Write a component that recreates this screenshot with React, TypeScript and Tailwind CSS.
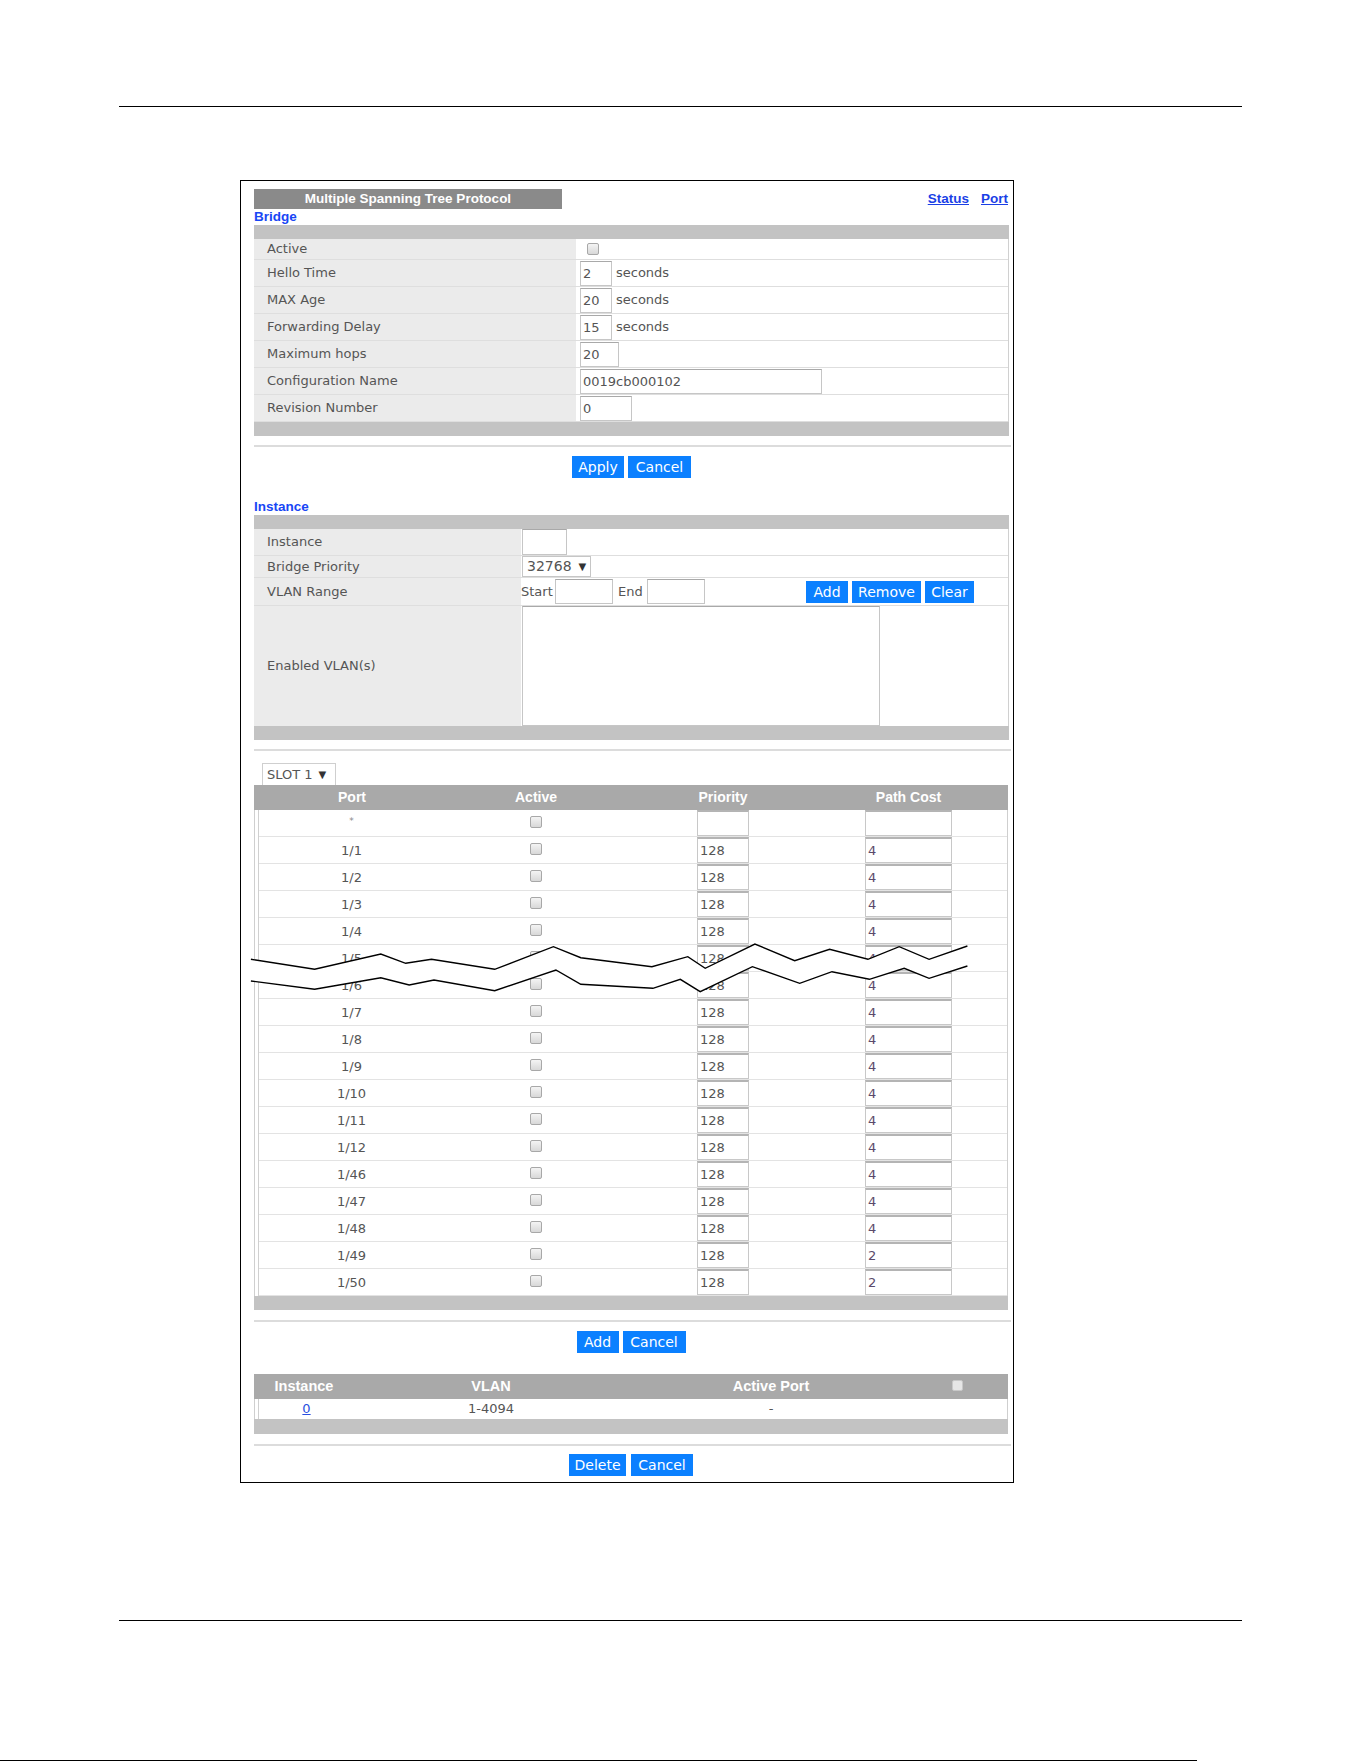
import React from "react";

const body = "font-['DejaVu_Sans',sans-serif]";
const sansB = "font-['Liberation_Sans',Arial,sans-serif] font-bold";

function Check({ className = "" }: { className?: string }) {
  return (
    <div
      className={
        "w-[12px] h-[12px] rounded-[2px] border border-[#a8a8a8] bg-gradient-to-b from-[#f4f4f4] to-[#d8d8d8] " +
        className
      }
    />
  );
}

function Box({ w, text = "", className = "" }: { w: string; text?: string; className?: string }) {
  return (
    <div
      className={
        "h-[25px] border border-[#c6c6c6] border-t-[#a9a9a9] bg-white pl-[2px] text-[13px] leading-[23px] text-[#555] whitespace-nowrap overflow-hidden " +
        w +
        " " +
        className
      }
    >
      {text}
    </div>
  );
}

function Btn({ w, label }: { w: string; label: string }) {
  return (
    <div className={"h-[22px] bg-[#0b80ff] text-white text-[14px] leading-[22px] text-center " + w}>
      {label}
    </div>
  );
}

function Bar({ h = "h-[14px]" }: { h?: string }) {
  return <div className={h + " bg-[#c3c3c3]"} />;
}

function Sep() {
  return <div className="h-[2px] bg-[#dcdcdc]" />;
}

const bridgeRows: { label: string; h: string; value: React.ReactNode }[] = [
  { label: "Active", h: "h-[21px]", value: <Check className="ml-[7px]" /> },
  {
    label: "Hello Time",
    h: "h-[27px]",
    value: (
      <>
        <Box w="w-[32px]" text="2" />
        <span className="ml-[4px]">seconds</span>
      </>
    ),
  },
  {
    label: "MAX Age",
    h: "h-[27px]",
    value: (
      <>
        <Box w="w-[32px]" text="20" />
        <span className="ml-[4px]">seconds</span>
      </>
    ),
  },
  {
    label: "Forwarding Delay",
    h: "h-[27px]",
    value: (
      <>
        <Box w="w-[32px]" text="15" />
        <span className="ml-[4px]">seconds</span>
      </>
    ),
  },
  { label: "Maximum hops", h: "h-[27px]", value: <Box w="w-[39px]" text="20" /> },
  { label: "Configuration Name", h: "h-[27px]", value: <Box w="w-[242px]" text="0019cb000102" /> },
  { label: "Revision Number", h: "h-[27px]", value: <Box w="w-[52px]" text="0" /> },
];

const ports = [
  "1/1", "1/2", "1/3", "1/4", "1/5", "1/6", "1/7", "1/8", "1/9", "1/10", "1/11", "1/12",
  "1/46", "1/47", "1/48", "1/49", "1/50",
];
const costs: Record<string, string> = { "1/49": "2", "1/50": "2" };

const raw1: [number, number][] = [
  [251, 959.3], [315, 969.3], [381.5, 954], [406.5, 963.3], [432.5, 959.3], [496, 969.3],
  [555, 946.7], [582.5, 957.7], [654, 966.7], [690, 956.7], [707.5, 968.3], [757.5, 944],
  [797.5, 960.7], [832.5, 949.3], [871, 959.3], [902.5, 946.7], [932.5, 959.3], [971, 946],
];
const raw2: [number, number][] = [
  [251, 981], [315, 989.3], [381.5, 977.7], [410, 985], [435, 980], [496, 990.7],
  [557.5, 970], [582.5, 984.3], [655, 988.3], [682.5, 979.3], [702.5, 991.7], [755, 966.7],
  [802.5, 983.3], [835, 971.7], [872.5, 979.3], [907.5, 968.3], [932.5, 978.3], [971, 966],
];
const fx = (x: number) => (240 + ((x - 240) * 2) / 2.01).toFixed(1);
const pts = (a: [number, number][]) => a.map(([x, y]) => fx(x) + "," + y).join(" ");
const line1 = pts(raw1);
const line2 = pts(raw2);
const line2Rev = pts([...raw2].reverse());

export default function App() {
  return (
    <div className={"relative w-[1361px] h-[1761px] bg-white overflow-hidden " + body}>
      <div className="pt-[106px] px-[119px]">
        <div className="h-px bg-black" />
      </div>

      <div className="ml-[240px] mt-[73px] w-[774px] border border-black pl-[13px] pr-[2px] pt-[8px] pb-[6px] text-[13px] text-[#555]">
        {/* title row */}
        <div className="flex justify-between items-center h-[20px]">
          <div className={"w-[308px] h-[20px] bg-[#8a8a8a] text-white text-[13.5px] leading-[20px] text-center " + sansB}>
            Multiple Spanning Tree Protocol
          </div>
          <div className={"flex gap-[12px] pr-[3px] text-[13.5px] text-[#1a3fe6] underline " + sansB}>
            <span>Status</span>
            <span>Port</span>
          </div>
        </div>
        <div className={"h-[16px] leading-[16px] text-[13.5px] text-[#1846f5] " + sansB}>Bridge</div>

        {/* Bridge table */}
        <div className="mr-[2px]">
          <Bar />
          <div className="border-r border-[#d0d0d0]">
            {bridgeRows.map((r) => (
              <div key={r.label} className={"grid grid-cols-[322px_1fr] border-b border-[#dedede] " + r.h}>
                <div className="bg-[#ebebeb] pl-[13px] flex items-center">{r.label}</div>
                <div className="pl-[4px] flex items-center bg-white">{r.value}</div>
              </div>
            ))}
          </div>
          <Bar />
        </div>

        <div className="mt-[9px]">
          <Sep />
        </div>
        <div className="mt-[9px] mr-[2px] flex justify-center gap-[4px]">
          <Btn w="w-[52px]" label="Apply" />
          <Btn w="w-[63px]" label="Cancel" />
        </div>

        <div className={"mt-[21px] h-[16px] leading-[16px] text-[13.5px] text-[#1846f5] " + sansB}>Instance</div>

        {/* Instance table */}
        <div className="mr-[2px]">
          <Bar />
          <div className="border-r border-[#d0d0d0]">
            <div className="grid grid-cols-[267px_1fr] h-[27px] border-b border-[#dedede]">
              <div className="bg-[#ebebeb] pl-[13px] flex items-center">Instance</div>
              <div className="flex items-start">
                <div className="w-[45px] h-[26px] border border-[#c6c6c6] border-t-[#a9a9a9] ml-px" />
              </div>
            </div>
            <div className="grid grid-cols-[267px_1fr] h-[22px] border-b border-[#dedede]">
              <div className="bg-[#ebebeb] pl-[13px] flex items-center">Bridge Priority</div>
              <div className="flex items-center">
                <div className="ml-px w-[69px] h-[21px] border border-[#c6c6c6] flex items-center pl-[4px] text-[14px] text-[#555]">
                  32768
                  <span className="ml-[7px] text-[10px] text-[#333]">▼</span>
                </div>
              </div>
            </div>
            <div className="grid grid-cols-[267px_1fr] h-[28px] border-b border-[#dedede]">
              <div className="bg-[#ebebeb] pl-[13px] flex items-center">VLAN Range</div>
              <div className="flex items-center">
                <span className="w-[34px]">Start</span>
                <Box w="w-[58px]" />
                <span className="ml-[5px] w-[29px]">End</span>
                <Box w="w-[58px]" />
                <div className="ml-[101px] flex gap-[4px]">
                  <Btn w="w-[42px]" label="Add" />
                  <Btn w="w-[69px]" label="Remove" />
                  <Btn w="w-[49px]" label="Clear" />
                </div>
              </div>
            </div>
            <div className="grid grid-cols-[267px_1fr] h-[120px]">
              <div className="bg-[#ebebeb] pl-[13px] flex items-center">Enabled VLAN(s)</div>
              <div className="flex items-stretch">
                <div className="ml-px w-[358px] border border-[#c6c6c6] border-t-[#a9a9a9] bg-white" />
              </div>
            </div>
          </div>
          <Bar />
        </div>

        <div className="mt-[9px]">
          <Sep />
        </div>

        {/* Slot select */}
        <div className="mt-[12px] ml-[8px] w-[74px] h-[22px] border border-[#cfcfcf] border-b-0 flex items-center pl-[4px] text-[13px] text-[#555]">
          SLOT 1<span className="ml-[6px] text-[10px] text-[#333]">▼</span>
        </div>

        {/* Port table */}
        <div className="mr-[3px]">
          <div className={"grid grid-cols-[196px_172px_75px_168px_1fr] h-[25px] bg-[#a9a9a9] text-white text-[14px] items-center " + sansB}>
            <div className="text-center">Port</div>
            <div className="text-center">Active</div>
            <div />
            <div className="w-[52px] text-center">Priority</div>
            <div className="w-[87px] text-center">Path Cost</div>
          </div>
          <div className="border-l border-[#b0b0b0] border-r border-[#cfcfcf]">
            <div className="ml-[3px] border-l border-[#d0d0d0]">
              {["*", ...ports].map((p) => (
                <div
                  key={p}
                  className="grid grid-cols-[185px_184px_69px_168px_1fr] h-[27px] border-b border-[#e3e3e3] items-start"
                >
                  <div className="h-full flex items-center justify-center pt-[1px] text-[13px] text-[#555]">
                    {p === "*" ? <span className="text-[9px] text-[#888] -mt-[4px]">*</span> : p}
                  </div>
                  <div className="h-full flex justify-center pt-[6px]">
                    <Check />
                  </div>
                  <div />
                  <div className="w-[52px] h-[26px] border border-[#c8c8c8] border-t-2 border-t-[#b4b4b4] pl-[2px] text-[13px] leading-[23px] text-[#555]">
                    {p === "*" ? "" : "128"}
                  </div>
                  <div className="w-[87px] h-[26px] border border-[#c8c8c8] border-t-2 border-t-[#b4b4b4] pl-[2px] text-[13px] leading-[23px] text-[#5a4a6a]">
                    {p === "*" ? "" : costs[p] ?? "4"}
                  </div>
                </div>
              ))}
            </div>
          </div>
          <Bar />
        </div>

        <div className="mt-[10px]">
          <Sep />
        </div>
        <div className="mt-[9px] mr-[3px] flex justify-center gap-[4px]">
          <Btn w="w-[42px]" label="Add" />
          <Btn w="w-[63px]" label="Cancel" />
        </div>

        {/* Instance list */}
        <div className="mt-[21px] mr-[3px]">
          <div className={"grid grid-cols-[100px_274px_286px_86px_1fr] h-[25px] bg-[#a9a9a9] text-white text-[14.5px] items-center " + sansB}>
            <div className="text-center">Instance</div>
            <div className="text-center">VLAN</div>
            <div className="text-center">Active Port</div>
            <div className="flex justify-center -mt-[3px]">
              <div className="w-[11px] h-[11px] rounded-[2px] bg-[#e6e6e6] border border-[#c8c8c8]" />
            </div>
            <div />
          </div>
          <div className="border-l border-[#b0b0b0] border-r border-[#cfcfcf]">
            <div className="ml-[3px] border-l border-[#d0d0d0] grid grid-cols-[95px_274px_286px_86px_1fr] h-[20px] items-center text-[13px] text-[#555]">
              <div className="text-center text-[#2a4fe0] underline">0</div>
              <div className="text-center">1-4094</div>
              <div className="text-center">-</div>
              <div />
              <div />
            </div>
          </div>
          <Bar h="h-[15px]" />
        </div>

        <div className="mt-[10px]">
          <Sep />
        </div>
        <div className="mt-[8px] mr-[3px] flex justify-center gap-[5px]">
          <Btn w="w-[57px]" label="Delete" />
          <Btn w="w-[62px]" label="Cancel" />
        </div>
      </div>

      <div className="mt-[137px] mx-[119px] h-px bg-black" />
      <div className="absolute left-0 bottom-0 w-[1197px] h-px bg-black" />

      {/* break marks */}
      <svg
        className="absolute left-0 top-0 pointer-events-none"
        width="1361"
        height="1761"
        viewBox="0 0 1361 1761"
      >
        <polygon points={line1 + " " + line2Rev} fill="white" />
        <polyline points={line1} fill="none" stroke="black" strokeWidth="1.4" />
        <polyline points={line2} fill="none" stroke="black" strokeWidth="1.4" />
      </svg>
    </div>
  );
}
